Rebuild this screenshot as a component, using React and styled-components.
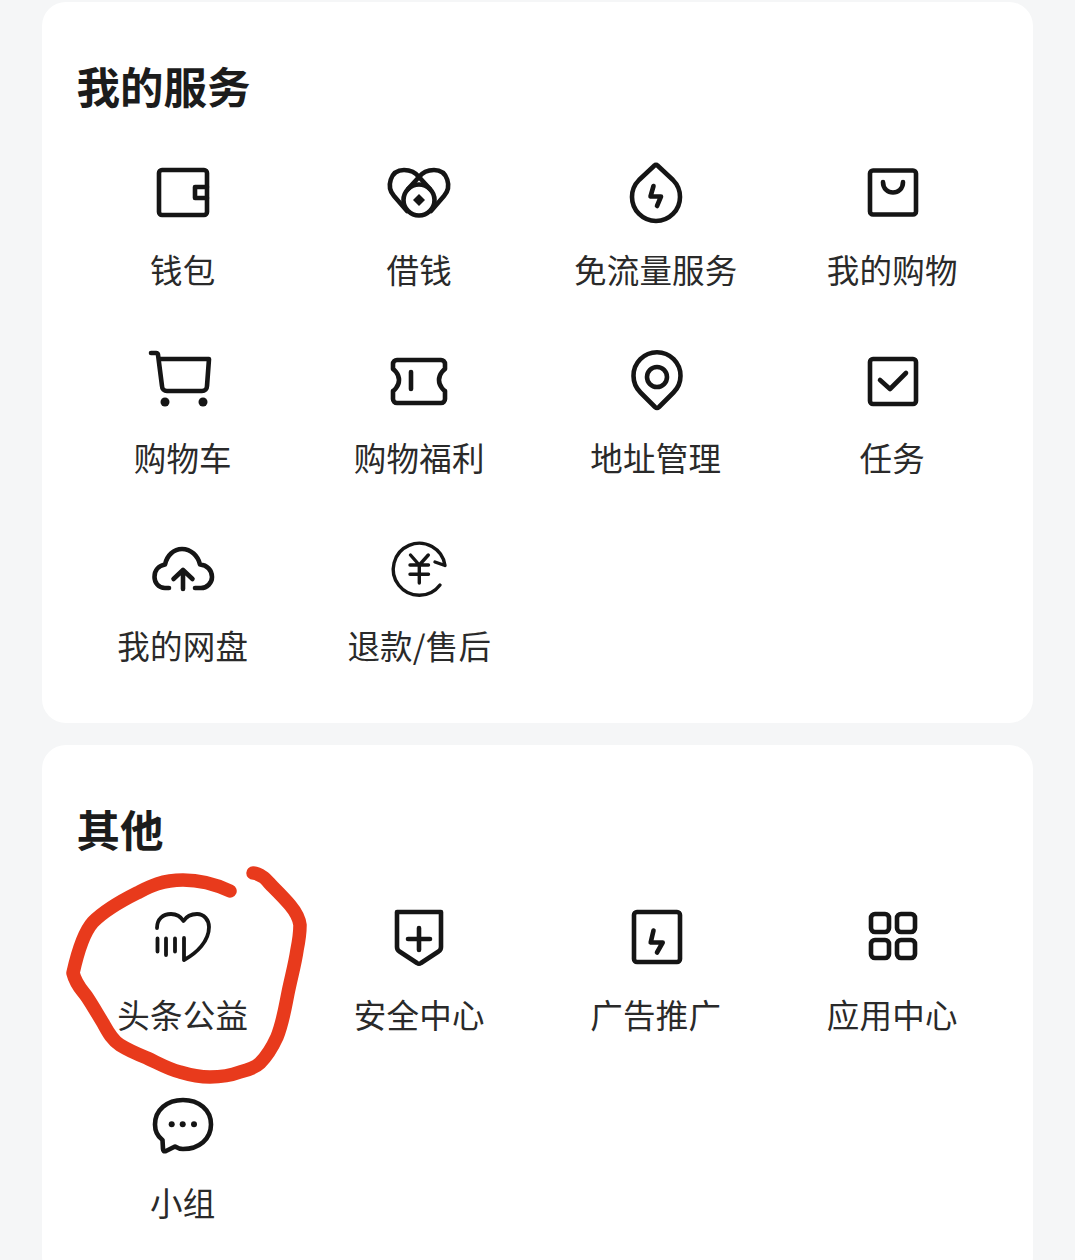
import React from "react";
import styled, { createGlobalStyle } from "styled-components";

const Global = createGlobalStyle`
  html, body { margin: 0; padding: 0; background: #f5f6f7; }
  #root { width: 1075px; }
`;

const Page = styled.div`
  position: relative;
  width: 1075px;
  height: 1260px;
  overflow: hidden;
  box-sizing: border-box;
  padding: 2px 42px 0;
  display: flex;
  flex-direction: column;
  gap: 22px;
  background: #f5f6f7;
  font-family: "Noto Sans CJK SC", "Noto Sans", sans-serif;
  color: #222;
`;

const Card = styled.section`
  background: #fff;
  border-radius: 24px;
  padding: 54px 22.5px 3px;
  flex: none;
`;

const Title = styled.h2`
  margin: 0 0 ${(p) => p.$gap}px 12px;
  font-size: 43.5px;
  line-height: 60px;
  font-weight: 700;
  color: #1c1c1c;
`;

const Grid = styled.div`
  display: grid;
  grid-template-columns: repeat(4, 1fr);
  grid-auto-rows: 188px;
`;

const Item = styled.div`
  display: flex;
  flex-direction: column;
  align-items: center;
`;

const Label = styled.span`
  margin-top: 19px;
  font-size: 32.5px;
  line-height: 44px;
  letter-spacing: 0.2px;
  white-space: nowrap;
  color: #2a2a2a;
`;

const Glyph = styled.svg`
  width: 72px;
  height: 72px;
  flex: none;
  fill: none;
  stroke: #151515;
  stroke-width: ${(p) => p.$w || 4.6};
  stroke-linecap: round;
  stroke-linejoin: round;
`;

const Dot = styled.circle`
  fill: #151515;
  stroke: none;
`;

const Scribble = styled.svg`
  position: absolute;
  left: 0;
  top: 0;
  width: 1075px;
  height: 1260px;
  fill: none;
  stroke: #e83a1c;
  stroke-width: 13.5;
  stroke-linecap: round;
  stroke-linejoin: round;
  pointer-events: none;
`;

const Icon = ({ w, children }) => (
  <Glyph viewBox="0 0 72 72" $w={w}>
    {children}
  </Glyph>
);

const icons = {
  wallet: (
    <Icon>
      <rect x="12" y="14" width="48" height="45" rx="3" />
      <path d="M60 31H48V42H60" />
    </Icon>
  ),
  coin: (
    <Icon>
      <path d="M24 55L11 40C3 31 7 14 21 14C28 14 33 17 36 21C39 17 44 14 51 14C65 14 69 31 61 40L48 55" />
      <path d="M36 21L25 33M36 21L47 33" />
      <circle cx="36" cy="44" r="15.500" />
      <path d="M36 38L42 44L36 50L30 44Z" fill="#151515" stroke="none" />
    </Icon>
  ),
  drop: (
    <Icon>
      <path d="M34.500 9.500a2 2 0 0 1 3 0L53 24A24 24 0 1 1 19 24Z" />
      <path d="M33.500 30L30.500 40.500H41L37 50" />
    </Icon>
  ),
  bag: (
    <Icon>
      <rect x="14" y="14.500" width="46" height="44" rx="3" />
      <path d="M27 26C27 40 47 40 47 26" />
    </Icon>
  ),
  cart: (
    <Icon>
      <path d="M4 9H9a2 2 0 0 1 2 1.700L15 42a5 5 0 0 0 5 5H55a5 5 0 0 0 5-5L62 15H11.500" />
      <Dot cx="18" cy="58" r="4.500" />
      <Dot cx="56" cy="58" r="4.500" />
    </Icon>
  ),
  ticket: (
    <Icon>
      <path d="M14 16H58a4 4 0 0 1 4 4v5c0 0-6 4-6 11s6 11 6 11v8a4 4 0 0 1-4 4H14a4 4 0 0 1-4-4v-8s6-4 6-11s-6-11-6-11v-5a4 4 0 0 1 4-4Z" />
      <path d="M28 28V45" />
    </Icon>
  ),
  pin: (
    <Icon>
      <path d="M35 63L20.500 48.500A23.500 23.500 0 1 1 53.500 48.500L39 63a3 3 0 0 1-4 0Z" />
      <circle cx="37" cy="33" r="10" />
    </Icon>
  ),
  check: (
    <Icon>
      <rect x="14" y="15" width="46" height="45" rx="3" />
      <path d="M24 36L34 45L50 29" />
    </Icon>
  ),
  cloud: (
    <Icon>
      <path d="M22 56H18C11 56 7.500 50 7.500 45C7.500 38 12 33.500 18 32.500C20 23 27 17 35 17C44 17 51 24 53 32.500C60 33 65 38 65 45C65 51 60 56 54 56H48" />
      <path d="M36 57V38M26.500 47L36 38L45.500 47" />
    </Icon>
  ),
  refund: (
    <Icon w={3.4}>
      <path d="M57 53A26 26 0 1 1 62 33.500L52 30" />
      <path d="M27.500 23L36.300 33L45.300 23M36.300 33V51M27 33H45.500M27 42.300H45.500" />
    </Icon>
  ),
  heart: (
    <Icon w={3.8}>
      <path d="M10 27C10 18 16 13 24 13C29 13 34 16 36.500 20C39 16 44 13 50 13C57 13 62 19 62 26C62 40 50 52 37 59V37" />
      <path d="M10.500 37.500V50.500M19 37.500V54M28 37.500V50.500" />
    </Icon>
  ),
  shield: (
    <Icon>
      <path d="M14 11H58V46Q58 49 55.500 50.500L38 62Q36 63.500 34 62L16.500 50.500Q14 49 14 46Z" />
      <path d="M36 27V49M25 38H47" />
    </Icon>
  ),
  zap: (
    <Icon>
      <rect x="14" y="11" width="46" height="50" rx="3" />
      <path d="M33.500 29.500L30.700 41.500H42.700L37 51.500" />
    </Icon>
  ),
  apps: (
    <Icon>
      <rect x="15" y="13" width="18" height="18" rx="4" />
      <rect x="41" y="13" width="18" height="18" rx="4" />
      <rect x="15" y="39" width="18" height="18" rx="4" />
      <rect x="41" y="39" width="18" height="18" rx="4" />
    </Icon>
  ),
  chat: (
    <Icon>
      <path d="M28 57.500L19 62Q16 63 16 60L15.500 51C10 47 8 41.500 8 35.500C8 21 20 11 36 11C52 11 64 21 64 35.500C64 50 52 60 36 60C33 60 30.500 59 28 57.500Z" />
      <Dot cx="24.700" cy="35.300" r="3" />
      <Dot cx="35.700" cy="35.300" r="3" />
      <Dot cx="47" cy="35.300" r="3" />
    </Icon>
  ),
};

const services = [
  ["wallet", "钱包"],
  ["coin", "借钱"],
  ["drop", "免流量服务"],
  ["bag", "我的购物"],
  ["cart", "购物车"],
  ["ticket", "购物福利"],
  ["pin", "地址管理"],
  ["check", "任务"],
  ["cloud", "我的网盘"],
  ["refund", "退款/售后"],
];

const others = [
  ["heart", "头条公益"],
  ["shield", "安全中心"],
  ["zap", "广告推广"],
  ["apps", "应用中心"],
  ["chat", "小组"],
];

const Section = ({ title, gap, items }) => (
  <Card>
    <Title $gap={gap}>{title}</Title>
    <Grid>
      {items.map(([icon, label]) => (
        <Item key={label}>
          {icons[icon]}
          <Label>{label}</Label>
        </Item>
      ))}
    </Grid>
  </Card>
);

export default function App() {
  return (
    <Page>
      <Global />
      <Section title="我的服务" gap={40} items={services} />
      <Section title="其他" gap={42} items={others} />
      <Scribble viewBox="0 0 1075 1260">
        <path d="M230 891C215 884 200 880 183 880C160 880 147 888 137 893C125 899 105 910 93 922C84 932 77 955 73 973C76 985 82 990 87 997C93 1006 98 1015 103 1023C108 1032 112 1040 120 1045C128 1050 137 1054 147 1058C158 1063 168 1069 180 1072C190 1075 200 1077 210 1077C222 1077 232 1075 240 1072C248 1070 255 1068 260 1063C268 1055 272 1048 277 1037C283 1022 285 1008 288 993C291 978 295 964 297 950C299 940 300 932 300 925C299 917 295 911 290 905C284 898 279 893 273 887C269 883 266 879 263 877C260 875 256 873 253 873" />
      </Scribble>
    </Page>
  );
}
